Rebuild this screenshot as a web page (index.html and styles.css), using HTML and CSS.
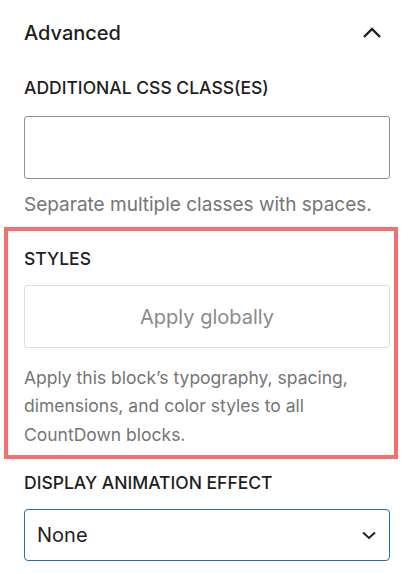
FILE: index.html
```html
<!DOCTYPE html>
<html lang="en">
<head>
<meta charset="utf-8">
<link rel="stylesheet" href="styles.css">
</head>
<body>
<div class="panel">
  <div class="panel-header">
    <span class="panel-title">Advanced</span>
    <svg class="chev-up" width="24" height="24" viewBox="0 0 24 24"><path d="M4 16 L12 8 L20 16" fill="none" stroke="#1e1e1e" stroke-width="2.4"/></svg>
  </div>
  <div class="field">
    <div class="label">Additional CSS class(es)</div>
    <div class="text-input"></div>
    <div class="help">Separate multiple classes with spaces.</div>
  </div>
  <div class="highlight">
    <div class="label">Styles</div>
    <div class="button">Apply globally</div>
    <div class="help help-long">Apply this block’s typography, spacing, dimensions, and color styles to all CountDown blocks.</div>
  </div>
  <div class="field field-select">
    <div class="label">Display animation effect</div>
    <div class="select">
      <span class="select-value">None</span>
      <svg class="chev-down" width="18" height="18" viewBox="0 0 18 18"><path d="M3 6.5 L9 12 L15 6.5" fill="none" stroke="#1e1e1e" stroke-width="1.9"/></svg>
    </div>
  </div>
</div>
</body>
</html>
```
FILE: styles.css
```css
* { box-sizing: border-box; }
html, body { margin: 0; padding: 0; background: #fff; }
body {
  font-family: Inter, "Noto Sans", "Liberation Sans", sans-serif;
  color: #1e1e1e;
  width: 408px;
  height: 574px;
  overflow: hidden;
}
.panel {
  padding: 0 18px 0 24px;
}
.panel-header {
  height: 66px;
  display: flex;
  align-items: center;
  justify-content: space-between;
}
.panel-title {
  font-size: 20px;
  font-weight: 500;
}
.chev-up { margin-right: 6px; }
.label {
  font-size: 17.5px;
  font-weight: 500;
  text-transform: uppercase;
  line-height: 24px;
}
.field .label { margin-top: 10px; }
.text-input {
  margin-top: 16px;
  height: 63px;
  border: 1.5px solid #8c8f94;
  border-radius: 3px;
}
.help {
  margin-top: 12px;
  font-size: 19px;
  line-height: 27px;
  color: #757575;
}
.highlight {
  margin: 9px -8px 0 -20px;
  border: 4px solid #f2716f;
  padding: 16px 4px 6px 16px;
}
.button {
  margin-top: 14px;
  height: 63px;
  border: 1.5px solid #dcdcde;
  border-radius: 3px;
  display: flex;
  align-items: center;
  justify-content: center;
  font-size: 20px;
  color: #8a8a8a;
}
.help-long {
  margin-top: 16px;
  font-size: 17.5px;
  line-height: 28.3px;
}
.field-select .label { margin-top: 12px; }
.select {
  margin-top: 14px;
  height: 52px;
  border: 1.5px solid #2271b1;
  border-radius: 4px;
  display: flex;
  align-items: center;
  justify-content: space-between;
  padding: 0 11px 0 12px;
}
.select-value {
  font-size: 20px;
}
```
